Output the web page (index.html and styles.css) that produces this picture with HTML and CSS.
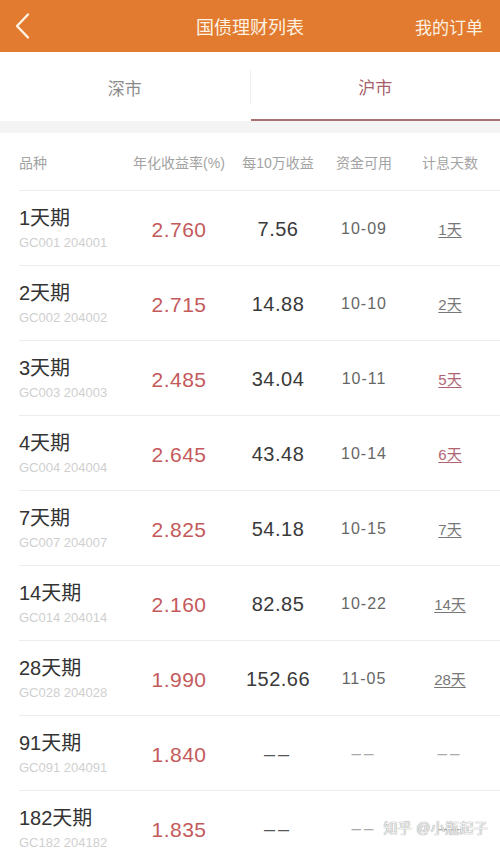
FILE: index.html
```html
<!DOCTYPE html>
<html lang="zh">
<head>
<meta charset="utf-8">
<title>国债理财列表</title>
<link rel="stylesheet" href="styles.css">
</head>
<body>
<div class="app">
  <header class="nav">
    <span class="back">
      <svg width="20" height="28" viewBox="0 0 20 28"><path d="M15 2.5 L4 14 L15 25.5" fill="none" stroke="#fdf3e6" stroke-width="2.4" stroke-linecap="round" stroke-linejoin="round"/></svg>
    </span>
    <h1 class="title">国债理财列表</h1>
    <span class="orders">我的订单</span>
  </header>
  <nav class="tabs">
    <div class="tab">深市</div>
    <div class="tab-divider"></div>
    <div class="tab active">沪市</div>
  </nav>
  <div class="gap"></div>
  <div class="table">
    <div class="row head">
      <div class="c1">品种</div>
      <div class="c2">年化收益率(%)</div>
      <div class="c3">每10万收益</div>
      <div class="c4">资金可用</div>
      <div class="c5">计息天数</div>
    </div>
    <div class="row">
      <div class="c1"><div class="name">1天期</div><div class="code">GC001 204001</div></div>
      <div class="c2 rate">2.760</div>
      <div class="c3 earn">7.56</div>
      <div class="c4 date">10-09</div>
      <div class="c5"><span class="days">1天</span></div>
    </div>
    <div class="row">
      <div class="c1"><div class="name">2天期</div><div class="code">GC002 204002</div></div>
      <div class="c2 rate">2.715</div>
      <div class="c3 earn">14.88</div>
      <div class="c4 date">10-10</div>
      <div class="c5"><span class="days">2天</span></div>
    </div>
    <div class="row">
      <div class="c1"><div class="name">3天期</div><div class="code">GC003 204003</div></div>
      <div class="c2 rate">2.485</div>
      <div class="c3 earn">34.04</div>
      <div class="c4 date">10-11</div>
      <div class="c5"><span class="days red">5天</span></div>
    </div>
    <div class="row">
      <div class="c1"><div class="name">4天期</div><div class="code">GC004 204004</div></div>
      <div class="c2 rate">2.645</div>
      <div class="c3 earn">43.48</div>
      <div class="c4 date">10-14</div>
      <div class="c5"><span class="days red">6天</span></div>
    </div>
    <div class="row">
      <div class="c1"><div class="name">7天期</div><div class="code">GC007 204007</div></div>
      <div class="c2 rate">2.825</div>
      <div class="c3 earn">54.18</div>
      <div class="c4 date">10-15</div>
      <div class="c5"><span class="days">7天</span></div>
    </div>
    <div class="row">
      <div class="c1"><div class="name">14天期</div><div class="code">GC014 204014</div></div>
      <div class="c2 rate">2.160</div>
      <div class="c3 earn">82.85</div>
      <div class="c4 date">10-22</div>
      <div class="c5"><span class="days">14天</span></div>
    </div>
    <div class="row">
      <div class="c1"><div class="name">28天期</div><div class="code">GC028 204028</div></div>
      <div class="c2 rate">1.990</div>
      <div class="c3 earn">152.66</div>
      <div class="c4 date">11-05</div>
      <div class="c5"><span class="days">28天</span></div>
    </div>
    <div class="row">
      <div class="c1"><div class="name">91天期</div><div class="code">GC091 204091</div></div>
      <div class="c2 rate">1.840</div>
      <div class="c3 dash">––</div>
      <div class="c4 dash light">––</div>
      <div class="c5 dash light">––</div>
    </div>
    <div class="row">
      <div class="c1"><div class="name">182天期</div><div class="code">GC182 204182</div></div>
      <div class="c2 rate">1.835</div>
      <div class="c3 dash">––</div>
      <div class="c4 dash light">––</div>
      <div class="c5 dash light">––</div>
    </div>
  </div>
  <div class="watermark">知乎 @小瓶起子</div>
</div>
</body>
</html>
```

FILE: styles.css
```css
html, body {
  margin: 0;
  padding: 0;
  background: #ffffff;
}
body {
  font-family: "Liberation Sans", "Noto Sans CJK SC", sans-serif;
  color: #333;
  width: 500px;
  height: 861px;
  overflow: hidden;
}
.app {
  position: relative;
  width: 500px;
  height: 861px;
  overflow: hidden;
}
.nav {
  height: 52px;
  background: #e27b2f;
  display: grid;
  grid-template-columns: 100px 1fr 100px;
  align-items: center;
  color: #fdf1e2;
}
.back {
  display: flex;
  align-items: center;
  padding-left: 13px;
  height: 52px;
}
.title {
  margin: 0;
  font-size: 18px;
  font-weight: normal;
  text-align: center;
}
.orders {
  font-size: 17px;
  text-align: right;
  padding-right: 17px;
}
.tabs {
  height: 69px;
  display: flex;
  align-items: center;
  background: #fff;
}
.tab {
  flex: 1;
  height: 69px;
  display: flex;
  align-items: center;
  justify-content: center;
  font-size: 17px;
  color: #8a8a8a;
  box-sizing: border-box;
  padding-top: 2px;
}
.tab.active {
  color: #a5606a;
  border-bottom: 2px solid #a87272;
}
.tab-divider {
  width: 1px;
  height: 34px;
  background: #efefef;
}
.gap {
  height: 12px;
  background: #f4f4f4;
}
.table {
  padding-left: 19px;
}
.row {
  display: grid;
  grid-template-columns: 111px 98px 100px 72px 100px;
  align-items: center;
  height: 74px;
  border-top: 1px solid #ececec;
}
.row.head {
  height: 57px;
  border-top: none;
  font-size: 14px;
  color: #a3a3a3;
}
.c2, .c3, .c4, .c5 {
  text-align: center;
}
.name {
  font-size: 20px;
  color: #333;
  line-height: 24px;
}
.code {
  font-size: 13px;
  color: #cfcfcf;
  line-height: 16px;
  margin-top: 5px;
}
.rate {
  font-size: 21px;
  color: #c45a5c;
  letter-spacing: 0.5px;
  padding-top: 3px;
}
.earn {
  font-size: 20px;
  color: #3a3a3a;
  letter-spacing: 0.5px;
  padding-top: 3px;
}
.date {
  font-size: 16px;
  color: #666;
  letter-spacing: 1px;
  padding-top: 2px;
}
.days {
  font-size: 15px;
  color: #777;
  text-decoration: underline;
  text-underline-offset: 2px;
}
.days.red {
  color: #b06472;
}
.dash {
  font-size: 20px;
  color: #555;
  letter-spacing: 3px;
  padding-top: 2px;
}
.dash.light {
  color: #aaa;
  font-size: 17px;
}
.watermark {
  position: absolute;
  right: 12px;
  bottom: 24px;
  font-size: 14px;
  color: #f0f0f0;
  text-shadow: 0 0 1px #9a9a9a, 0 0 1px #9a9a9a;
  letter-spacing: 0.3px;
}
```
